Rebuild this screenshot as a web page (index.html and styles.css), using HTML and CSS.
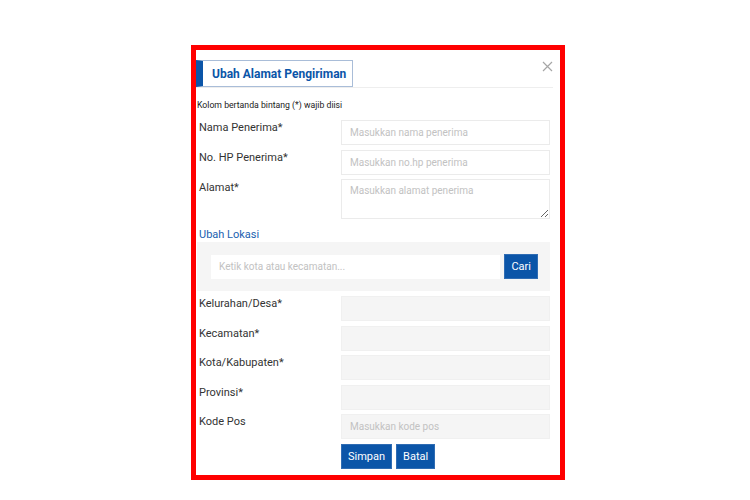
FILE: index.html
```html
<!DOCTYPE html>
<html lang="id">
<head>
    <meta charset="UTF-8">
    <meta name="viewport" content="width=device-width, initial-scale=1.0">
    <title>Ubah Alamat Pengiriman</title>
    <link rel="stylesheet" href="styles.css">
</head>
<body>
    <div class="modal">
        <div class="modal-header">
            <h2 class="modal-title">Ubah Alamat Pengiriman</h2>
            <button class="close" type="button" aria-label="Tutup">
                <svg width="11" height="11" viewBox="0 0 11 11">
                    <path d="M1 1L10 10M10 1L1 10" stroke="#a6a6a6" stroke-width="1.2" fill="none"/>
                </svg>
            </button>
        </div>
        <p class="note">Kolom bertanda bintang (*) wajib diisi</p>

        <div class="row">
            <label>Nama Penerima*</label>
            <input type="text" class="field" placeholder="Masukkan nama penerima">
        </div>
        <div class="row">
            <label>No. HP Penerima*</label>
            <input type="text" class="field" placeholder="Masukkan no.hp penerima">
        </div>
        <div class="row">
            <label>Alamat*</label>
            <textarea class="field area" placeholder="Masukkan alamat penerima"></textarea>
        </div>

        <a class="link" href="#">Ubah Lokasi</a>
        <div class="search-box">
            <input type="text" class="search" placeholder="Ketik kota atau kecamatan...">
            <button class="btn" type="button">Cari</button>
        </div>

        <div class="row tight">
            <label>Kelurahan/Desa*</label>
            <input type="text" class="field locked" readonly>
        </div>
        <div class="row tight">
            <label>Kecamatan*</label>
            <input type="text" class="field locked" readonly>
        </div>
        <div class="row tight">
            <label>Kota/Kabupaten*</label>
            <input type="text" class="field locked" readonly>
        </div>
        <div class="row tight">
            <label>Provinsi*</label>
            <input type="text" class="field locked" readonly>
        </div>
        <div class="row tight">
            <label>Kode Pos</label>
            <input type="text" class="field locked" placeholder="Masukkan kode pos">
        </div>

        <div class="actions">
            <button class="btn" type="button">Simpan</button>
            <button class="btn" type="button">Batal</button>
        </div>
    </div>
</body>
</html>
```

FILE: styles.css
```css
body {
    margin: 0;
    background: #fff;
    font-family: Roboto, "Liberation Sans", Arial, sans-serif;
    color: #333;
}
.modal {
    width: 353px;
    height: 415px;
    margin: 45px 0 0 191px;
    padding: 10px 10px 0 1px;
    border: 5px solid #f00;
    background: #fff;
}
.modal-header {
    display: flex;
    margin: 0 -3px 0 -1px;
    border-bottom: 1px solid #eee;
}
.modal-title {
    margin: 0;
    width: 140px;
    height: 25px;
    padding-left: 9px;
    border: 1px solid #a9bdd8;
    border-left: 7px solid #0b55a8;
    font-size: 12px;
    font-weight: bold;
    line-height: 26px;
    color: #0b55a8;
    white-space: nowrap;
}
.close {
    margin-left: auto;
    align-self: flex-start;
    margin-top: 1px;
    padding: 0;
    border: 0;
    background: none;
    width: 11px;
    height: 11px;
    cursor: pointer;
}
.close svg {
    display: block;
}
.note {
    margin: 11px 0 9px;
    font-size: 8.7px;
    line-height: 12px;
    color: #222;
}
.row {
    display: flex;
    margin-bottom: 5px;
}
.row label {
    width: 144px;
    padding-left: 2px;
    box-sizing: border-box;
    font-size: 11px;
    line-height: 15px;
    color: #333;
}
.field {
    width: 209px;
    height: 25px;
    box-sizing: border-box;
    padding: 0 8px;
    border: 1px solid #ebebeb;
    background: #fff;
    font-family: inherit;
    font-size: 10px;
    color: #333;
    outline: none;
}
.field::placeholder,
.search::placeholder {
    color: #c2c2c2;
}
.area {
    height: 40px;
    padding-top: 5px;
    margin-top: -1px;
}
.row.tight {
    margin-bottom: 4.5px;
}
.locked {
    background: #f5f5f5;
    border-color: #f0f0f0;
}
.link {
    display: block;
    margin: 8px 0 0 2px;
    font-size: 11px;
    line-height: 15px;
    color: #1a5fb0;
    text-decoration: none;
}
.search-box {
    display: flex;
    align-items: center;
    gap: 4px;
    height: 49px;
    margin-bottom: 5px;
    padding: 0 12px 0 14px;
    background: #f5f5f5;
}
.search {
    flex: 1;
    height: 24px;
    box-sizing: border-box;
    padding: 0 8px;
    border: 0;
    background: #fff;
    font-family: inherit;
    font-size: 10px;
    outline: none;
}
.btn {
    height: 25px;
    padding: 0 6px;
    border: 1px solid #2f6cb3;
    background: #0b55a8;
    color: #fff;
    font-family: inherit;
    font-size: 11px;
    cursor: pointer;
}
.actions {
    display: flex;
    gap: 4px;
    margin-left: 144px;
    margin-top: 5px;
}
```
